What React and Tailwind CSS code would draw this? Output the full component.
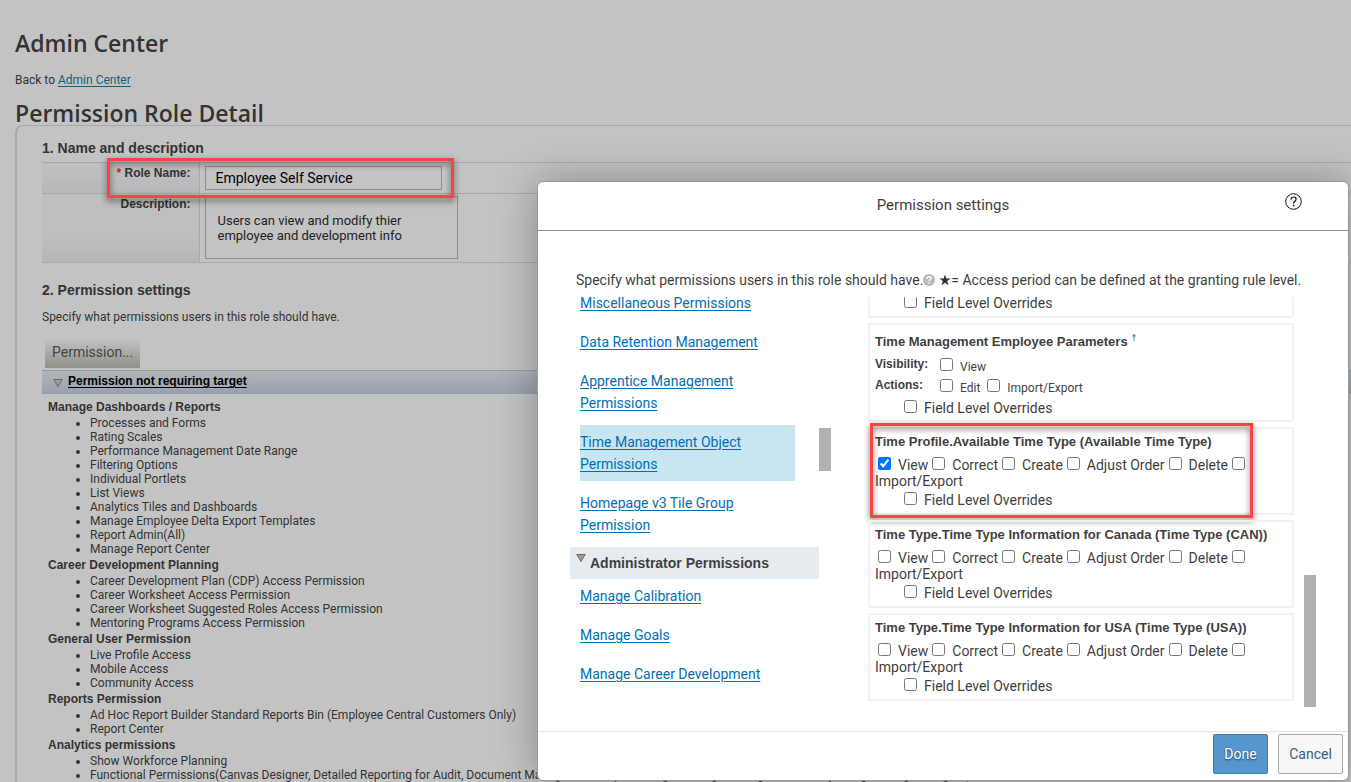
import React, { useState } from 'react';

const NOT_REQUIRING_TARGET = [
  {
    title: 'Manage Dashboards / Reports',
    items: [
      'Processes and Forms',
      'Rating Scales',
      'Performance Management Date Range',
      'Filtering Options',
      'Individual Portlets',
      'List Views',
      'Analytics Tiles and Dashboards',
      'Manage Employee Delta Export Templates',
      'Report Admin(All)',
      'Manage Report Center',
    ],
  },
  {
    title: 'Career Development Planning',
    items: [
      'Career Development Plan (CDP) Access Permission',
      'Career Worksheet Access Permission',
      'Career Worksheet Suggested Roles Access Permission',
      'Mentoring Programs Access Permission',
    ],
  },
  {
    title: 'General User Permission',
    items: ['Live Profile Access', 'Mobile Access', 'Community Access'],
  },
  {
    title: 'Reports Permission',
    items: [
      'Ad Hoc Report Builder Standard Reports Bin (Employee Central Customers Only)',
      'Report Center',
    ],
  },
  {
    title: 'Analytics permissions',
    items: [
      'Show Workforce Planning',
      'Functional Permissions(Canvas Designer, Detailed Reporting for Audit, Document Management, Report Designer, Image Management, Query Designer, Page Designer)',
    ],
  },
];

const USER_LINKS = [
  'Miscellaneous Permissions',
  'Data Retention Management',
  'Apprentice Management Permissions',
  'Time Management Object Permissions',
  'Homepage v3 Tile Group Permission',
];

const ADMIN_LINKS = ['Manage Calibration', 'Manage Goals', 'Manage Career Development'];

const OBJECT_ACTIONS = ['View', 'Correct', 'Create', 'Adjust Order', 'Delete', 'Import/Export'];

function Triangle({ className }) {
  return (
    <svg viewBox="0 0 10 8" className={className} aria-hidden="true">
      <path d="M0.8 0.5H9.2L5 7.5Z" fill="#a39a94" stroke="#6b6764" strokeWidth="1" />
    </svg>
  );
}

function Highlight({ className }) {
  return (
    <div
      className={`pointer-events-none absolute border-[3px] border-[#fb4343] drop-shadow-[0px_3px_3px_rgba(0,0,0,0.6)] ${className}`}
    />
  );
}

function Check({ label, defaultChecked = false }) {
  return (
    <label className="mr-px">
      <input
        type="checkbox"
        defaultChecked={defaultChecked}
        className="ml-[3px] mr-[7px] size-[13px] align-baseline"
      />
      {label}
    </label>
  );
}

function FieldOverrides() {
  return (
    <div className="pl-[26px] leading-[22px]">
      <Check label="Field Level Overrides" />
    </div>
  );
}

function ObjectCard({ title, viewChecked = false, highlighted = false }) {
  return (
    <section className="relative border-2 border-[#f2f2f2] pb-[2px] pl-[5px]">
      <h3 className="pt-[5px] font-['Liberation_Sans',sans-serif] text-[13px] font-bold leading-4">{title}</h3>
      <div className="w-[380px] pt-[7px] leading-4">
        {OBJECT_ACTIONS.map((a) => (
          <Check key={a} label={a} defaultChecked={a === 'View' && viewChecked} />
        ))}
      </div>
      <FieldOverrides />
      {highlighted && <Highlight className="-top-[6px] left-0 h-[95px] w-[383px]" />}
    </section>
  );
}

function NavLink({ label, active }) {
  return (
    <li className={`mb-[5px] ml-[10px] mr-6 py-[6px] leading-[22px] ${active ? 'bg-[#cae5f2]' : ''}`}>
      <a href="#" className="text-[#0070b1] underline underline-offset-2">
        {label}
      </a>
    </li>
  );
}

function PermissionDialog() {
  return (
    <div
      role="dialog"
      aria-labelledby="dialog-title"
      className="absolute bottom-px right-[2px] top-[181px] flex w-[812px] flex-col rounded-md border border-[#999] bg-white text-sm text-[#3f3f3f] shadow-[0_0_40px_rgba(0,0,0,0.3)]"
    >
      <header className="relative flex h-[49px] shrink-0 items-center justify-center border-b border-[#8c8c8c]">
        <h2 id="dialog-title" className="text-[15px]">
          Permission settings
        </h2>
        <button type="button" aria-label="Help" className="absolute right-[46px] top-[11px]">
          <svg viewBox="0 0 17 17" className="size-[17px]" fill="none" stroke="#111">
            <circle cx="8.5" cy="8.5" r="7.8" strokeWidth="1" />
            <path d="M6 6.6C6 4.9 7.1 4 8.6 4s2.5.9 2.5 2.3c0 1.9-2.5 2-2.5 4.1" strokeWidth="1.2" />
            <path d="M8.6 11.8v1.5" strokeWidth="1.5" />
          </svg>
        </button>
      </header>

      <p className="flex items-center pl-[38px] pt-[39px] leading-5">
        Specify what permissions users in this role should have.
        <svg viewBox="0 0 12 12" className="mr-1 size-3" aria-hidden="true">
          <circle cx="6" cy="6" r="6" fill="#b9b9b9" />
          <path d="M4 4.7C4 3.5 4.9 2.8 6 2.8s2 .6 2 1.7c0 1.3-1.9 1.4-1.9 2.6M6.1 8v1.5" fill="none" stroke="#fff" strokeWidth="1.4" />
        </svg>
        <svg viewBox="0 0 12 12" className="size-3" aria-hidden="true">
          <path d="M6 .6 7.4 4.6h4.2L8.2 7.1l1.3 4.2L6 8.8l-3.5 2.5 1.3-4.2L.4 4.6h4.2Z" fill="#333" />
        </svg>
        = Access period can be defined at the granting rule level.
      </p>

      <div className="mt-[7px] flex min-h-0 flex-1 overflow-hidden pl-8">
        <nav className="w-[249px] shrink-0">
          <ul className="-mt-[11px]">
            {USER_LINKS.map((l) => (
              <NavLink key={l} label={l} active={l.startsWith('Time')} />
            ))}
          </ul>
          <h3 className="flex h-8 items-center gap-1 bg-[#e6ebef] pl-[6px] font-['Liberation_Sans',sans-serif] text-sm font-bold">
            <Triangle className="mb-[10px] h-2 w-[10px]" />
            Administrator Permissions
          </h3>
          <ul>
            {ADMIN_LINKS.map((l) => (
              <NavLink key={l} label={l} />
            ))}
          </ul>
        </nav>
        <div className="mt-[131px] h-[43px] w-3 bg-[#b1b1b1]" />

        <div className="-mt-[5px] ml-[37px] flex w-[426px] flex-col gap-[5px]">
          <section className="border-x-2 border-b-2 border-[#f2f2f2] pb-[2px] pl-[5px]">
            <FieldOverrides />
          </section>
          <section className="border-2 border-[#f2f2f2] pb-px pl-[5px]">
            <h3 className="pt-2 font-['Liberation_Sans',sans-serif] text-[13px] font-bold leading-[18px]">
              Time Management Employee Parameters <sup className="font-normal">†</sup>
            </h3>
            <div className="mt-[7px] grid grid-cols-[62px_1fr] gap-y-[3px] text-xs leading-[18px]">
              <b className="font-['Liberation_Sans',sans-serif] leading-[13px]">Visibility:</b>
              <div>
                <Check label="View" />
              </div>
              <b className="font-['Liberation_Sans',sans-serif] leading-[13px]">Actions:</b>
              <div>
                <Check label="Edit" /> <Check label="Import/Export" />
              </div>
            </div>
            <FieldOverrides />
          </section>
          <ObjectCard title="Time Profile.Available Time Type (Available Time Type)" viewChecked highlighted />
          <ObjectCard title="Time Type.Time Type Information for Canada (Time Type (CAN))" />
          <ObjectCard title="Time Type.Time Type Information for USA (Time Type (USA))" />
        </div>
        <div className="ml-[10px] mt-[278px] h-[132px] w-3 bg-[#b1b1b1]" />
      </div>

      <footer className="flex h-[49px] shrink-0 items-start justify-end gap-[10px] border-t border-[#e5e5e5] pr-[5px] pt-[2px]">
        <button
          type="button"
          className="h-10 w-[55px] rounded-xs border border-[#427cac] bg-[#5496cd] text-white [text-shadow:0_1px_2px_rgba(0,0,0,0.6)]"
        >
          Done
        </button>
        <button type="button" className="h-10 w-[65px] rounded-xs border border-[#ababab] bg-[#f7f7f7] text-[#346187]">
          Cancel
        </button>
      </footer>
    </div>
  );
}

export default function App() {
  const [role, setRole] = useState('Employee Self Service');
  const [description, setDescription] = useState(
    'Users can view and modify thier employee and development info'
  );

  return (
    <div className="relative h-screen overflow-hidden bg-[#c3c3c3] pl-[15px] font-[Roboto,sans-serif] text-xs text-[#333]">
      <h1 className="pt-[27px] font-['Open_Sans',sans-serif] text-[23px] font-semibold leading-8">Admin Center</h1>
      <p className="mt-[13px] leading-4">
        Back to{' '}
        <a href="#" className="text-[#1b5b7a] underline underline-offset-2">
          Admin Center
        </a>
      </p>
      <h1 className="mt-[9px] font-['Open_Sans',sans-serif] text-[23px] font-semibold leading-8">Permission Role Detail</h1>

      <main className="-mt-1 rounded-tl-lg border-l-2 border-t border-[#a9a9a9] pl-[25px]">
        <h2 className="pt-3 font-['Liberation_Sans',sans-serif] text-sm font-bold leading-5">1. Name and description</h2>
        <div className="relative mt-1">
          <table className="w-full border-collapse">
            <tbody>
              <tr className="h-[31px] border-y border-[#a9a9a9]">
                <th className="w-[157px] border-r border-[#a9a9a9] bg-linear-to-b from-[#bfc1c1] to-[#b5b7ba] pr-2 pt-[3px] text-right align-top font-['Liberation_Sans',sans-serif] leading-[14px]">
                  <label htmlFor="role">
                    <span className="text-[#c22]">*</span> Role Name:
                  </label>
                </th>
                <td className="py-[3px] pl-[5px]">
                  <input
                    id="role"
                    value={role}
                    onChange={(e) => setRole(e.target.value)}
                    className="block h-6 w-[237px] border border-[#8f8f8f] px-[10px] text-sm text-black"
                  />
                </td>
              </tr>
              <tr className="h-[69px] border-b border-[#a9a9a9]">
                <th className="border-r border-[#a9a9a9] bg-linear-to-b from-[#bec0bf] from-60% to-[#b4b6b9] pr-2 pt-[3px] text-right align-top font-['Liberation_Sans',sans-serif] leading-[14px]">
                  <label htmlFor="description">Description:</label>
                </th>
                <td className="pb-[2px] pl-[5px]">
                  <textarea
                    id="description"
                    value={description}
                    onChange={(e) => setDescription(e.target.value)}
                    className="block h-[63px] w-[253px] resize-none border border-[#8f8f8f] py-4 pl-3 pr-8 text-[13px] leading-[15px] text-[#222]"
                  />
                </td>
              </tr>
            </tbody>
          </table>
          <Highlight className="-top-1 left-[65px] h-10 w-[347px]" />
        </div>

        <h2 className="mt-[17px] font-['Liberation_Sans',sans-serif] text-sm font-bold leading-5">2. Permission settings</h2>
        <p className="mt-[9px] leading-4">Specify what permissions users in this role should have.</p>
        <button
          type="button"
          className="ml-[3px] mt-[13px] block h-[30px] bg-linear-to-b from-[#c3c3c3] to-[#919187] px-[7px] pb-[2px] text-sm text-[#444]"
        >
          Permission...
        </button>
        <div className="mt-[2px] flex h-6 items-center gap-[5px] border-t border-[#949ba0] bg-linear-to-b from-[#b0b6ba] to-[#98a1ab] pl-[11px]">
          <Triangle className="h-2 w-[10px]" />
          <a href="#" className="pb-[3px] font-['Liberation_Sans',sans-serif] font-bold text-black underline underline-offset-2">
            Permission not requiring target
          </a>
        </div>

        <div className="pl-[6px] pt-1">
          {NOT_REQUIRING_TARGET.map((group) => (
            <section key={group.title}>
              <h3 className="font-['Liberation_Sans',sans-serif] font-bold leading-[18px]">{group.title}</h3>
              <ul className="list-disc whitespace-nowrap pl-[42px] leading-[14px]">
                {group.items.map((item) => (
                  <li key={item}>{item}</li>
                ))}
              </ul>
            </section>
          ))}
        </div>
      </main>

      <PermissionDialog />
    </div>
  );
}
